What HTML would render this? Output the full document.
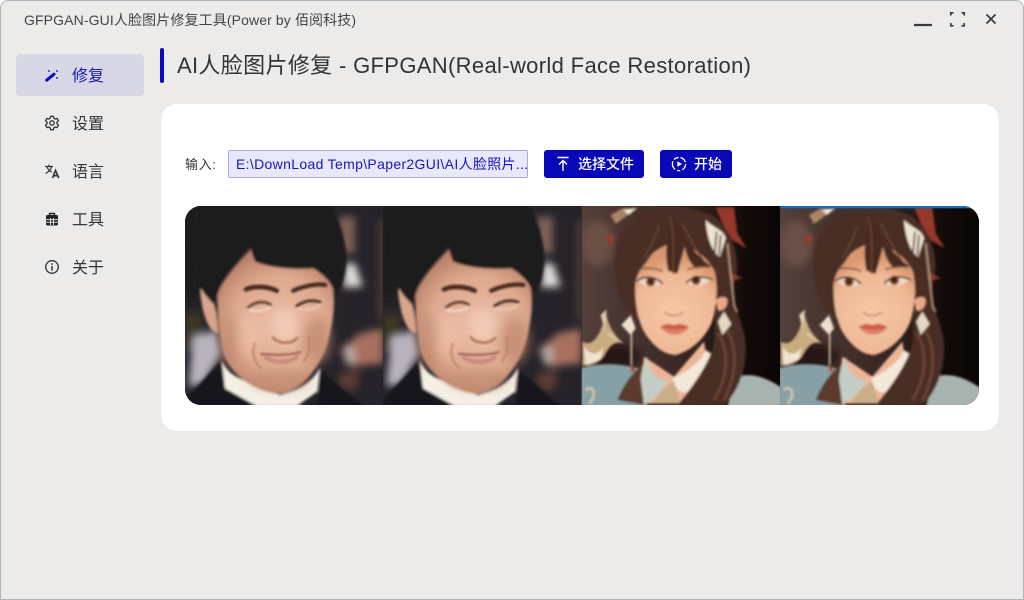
<!DOCTYPE html>
<html lang="zh">
<head>
<meta charset="utf-8">
<title>GFPGAN-GUI</title>
<style>
html,body{margin:0;padding:0;width:1024px;height:600px;overflow:hidden;background:#fff}
body{font-family:"Liberation Sans","Noto Sans CJK SC",sans-serif;position:relative}
#win{position:absolute;left:0;top:0;width:1024px;height:600px;box-sizing:border-box;background:#ecebea;border:1px solid #b4b4b4;border-radius:8px 8px 0 0;overflow:hidden}
.a{position:absolute;white-space:nowrap}
.nav{position:absolute;left:72px;font-size:16px;line-height:20px;color:#333}
.ic{position:absolute;left:44px;width:16px;height:16px}
</style>
</head>
<body>
<div id="win"></div>
<div class="a" style="left:24px;top:11px;font-size:14px;line-height:19px;color:#444;letter-spacing:.12px">GFPGAN-GUI人脸图片修复工具(Power by 佰阅科技)</div>

<svg class="a" style="left:905px;top:5px" width="110" height="30" viewBox="0 0 110 30" fill="none" stroke="#3a3a3a">
  <path d="M9 20H27" stroke-width="2.2"/>
  <path d="M45.8 10.5V7.8H48.5M56.5 7.8H59.2V10.5M59.2 18V20.8H56.5M48.5 20.8H45.8V18" stroke-width="1.7"/>
  <path d="M81.5 9.5L90.5 18.5M90.5 9.5L81.5 18.5" stroke-width="1.7"/>
</svg>

<div class="a" style="left:16px;top:54px;width:128px;height:42px;background:#d7d7e5;border-radius:4px"></div>

<svg class="ic" style="top:67px" viewBox="0 0 16 16">
  <path d="M2.7 13.2L10 7.2" stroke="#0a0ac0" stroke-width="3" stroke-linecap="round"/>
  <path d="M4 3h2v2H4zM12 3h2v2h-2zM12 10h2v2h-2z" fill="#5a5ad6"/>
</svg>
<div class="nav" style="top:67px;color:#1818b8">修复</div>

<svg class="ic" style="top:115px" viewBox="0 0 16 16" fill="none" stroke="#333" stroke-width="1.3">
  <path d="M6.6 1.3h2.8l.4 1.9 1.4.8 1.9-.6 1.4 2.4-1.5 1.3v1.8l1.5 1.3-1.4 2.4-1.9-.6-1.4.8-.4 1.9H6.6l-.4-1.9-1.4-.8-1.9.6-1.4-2.4 1.5-1.3V7.1L1.5 5.8l1.4-2.4 1.9.6 1.4-.8z" stroke-linejoin="round"/>
  <circle cx="8" cy="8" r="2.2"/>
</svg>
<div class="nav" style="top:115px">设置</div>

<svg class="ic" style="top:163px" viewBox="0 0 16 16" fill="none" stroke="#333" stroke-width="1.2">
  <path d="M1 3.5H9M5 1.5V3.5M7.5 3.5C6.8 6.5 4.5 9 1.5 10.5M2.8 3.5C3.6 6 5.5 8 8 9.2"/>
  <path d="M8.5 15L11.5 7.5L14.8 15M9.7 12.7H13.6" stroke-width="1.6"/>
</svg>
<div class="nav" style="top:163px">语言</div>

<svg class="ic" style="top:211px" viewBox="0 0 16 16">
  <path d="M5.5 4V2.5h5V4" fill="none" stroke="#222" stroke-width="1.4"/>
  <rect x="2" y="4" width="12" height="10.5" rx="1.6" fill="#222"/>
  <path d="M2 8.7H14M2 11.2H14M6.6 7V14M9.4 7V14" stroke="#ecebea" stroke-width=".9"/>
</svg>
<div class="nav" style="top:211px">工具</div>

<svg class="ic" style="top:259px" viewBox="0 0 16 16" fill="none" stroke="#333" stroke-width="1.3">
  <circle cx="8" cy="8" r="6.3"/>
  <path d="M8 7V11.5" stroke-width="1.5"/>
  <path d="M8 4.3V5.8" stroke-width="1.6"/>
</svg>
<div class="nav" style="top:259px">关于</div>

<div class="a" style="left:160px;top:48px;width:4px;height:35px;background:#0a0abd;border-radius:2px"></div>
<div class="a" style="left:177px;top:51px;font-size:22px;line-height:30px;color:#333;letter-spacing:.34px">AI人脸图片修复 - GFPGAN(Real-world Face Restoration)</div>

<div class="a" style="left:161px;top:104px;width:838px;height:327px;background:#fff;border-radius:16px"></div>

<div class="a" style="left:185px;top:156px;font-size:13px;line-height:18px;color:#333;letter-spacing:.7px">输入:</div>
<div class="a" style="left:228px;top:150px;width:300px;height:28px;box-sizing:border-box;background:#e8e8fa;border:1px solid #a8a8ee;border-radius:2px;padding-left:7px;font-size:14px;line-height:26px;color:#1616c4;overflow:hidden;letter-spacing:.33px">E:\DownLoad Temp\Paper2GUI\AI人脸照片...</div>

<div class="a" style="left:544px;top:150px;width:100px;height:28px;background:#0808b8;border-radius:3px"></div>
<svg class="a" style="left:555px;top:156px" width="16" height="16" viewBox="0 0 16 16" fill="none" stroke="#fff" stroke-width="1.4">
  <path d="M2.5 1.5H13.5M8 15V4.5M4 8.5L8 4.5L12 8.5"/>
</svg>
<div class="a" style="left:578px;top:155px;font-size:14px;line-height:18px;color:#fff;font-weight:500">选择文件</div>

<div class="a" style="left:660px;top:150px;width:72px;height:28px;background:#0808b8;border-radius:3px"></div>
<svg class="a" style="left:671px;top:156px" width="16" height="16" viewBox="0 0 16 16" fill="none" stroke="#fff" stroke-width="1.3">
  <circle cx="8" cy="8" r="6.6" stroke-dasharray="7 2.2 3 2.2 9 2 5 2"/>
  <path d="M6.3 5.2L11 8L6.3 10.8z" fill="#fff" stroke="none"/>
</svg>
<div class="a" style="left:694px;top:155px;font-size:14px;line-height:18px;color:#fff;font-weight:500">开始</div>

<svg class="a" style="left:185px;top:206px" width="794" height="199" viewBox="0 0 2382 597">
<defs>
  <clipPath id="cr"><rect width="2382" height="597" rx="48"/></clipPath>
  <clipPath id="c1"><rect x="15" y="18" width="595" height="597"/></clipPath>
  <clipPath id="c3"><rect x="3" y="18" width="597" height="597"/></clipPath>
  <filter id="b1" x="-10%" y="-10%" width="120%" height="120%"><feGaussianBlur stdDeviation="4"/></filter>
  <filter id="b2" x="-20%" y="-20%" width="140%" height="140%"><feGaussianBlur stdDeviation="12"/></filter>
  <filter id="b4" x="-40%" y="-40%" width="180%" height="180%"><feGaussianBlur stdDeviation="18"/></filter>
  <filter id="b3" x="-10%" y="-10%" width="120%" height="120%"><feGaussianBlur stdDeviation="3"/></filter>
  <filter id="b5" x="-20%" y="-40%" width="140%" height="180%"><feGaussianBlur stdDeviation="3.5"/></filter>
  <radialGradient id="sk" gradientUnits="userSpaceOnUse" cx="300" cy="370" r="220">
    <stop offset="0" stop-color="#eabda6"/><stop offset=".65" stop-color="#dda88e"/><stop offset="1" stop-color="#b98068"/>
  </radialGradient>
  <radialGradient id="sw" gradientUnits="userSpaceOnUse" cx="280" cy="340" r="170">
    <stop offset="0" stop-color="#f6c7a6"/><stop offset=".7" stop-color="#efb895"/><stop offset="1" stop-color="#d9966f"/>
  </radialGradient>
  <linearGradient id="bw" x1="0" x2="1" y1="0" y2="0">
    <stop offset="0" stop-color="#55403a"/><stop offset=".5" stop-color="#382622"/><stop offset=".78" stop-color="#120a09"/><stop offset="1" stop-color="#060303"/>
  </linearGradient>

  <g id="man">
    <rect x="0" y="0" width="640" height="640" fill="#26232a"/>
    <g filter="url(#b2)">
      <rect x="0" y="0" width="60" height="300" fill="#1d1b1c"/>
      <rect x="15" y="340" width="50" height="110" fill="#3d3724"/>
      <path d="M40 410L110 390L125 460L70 550L25 560z" fill="#b9b3bd"/>
      <rect x="475" y="50" width="50" height="110" fill="#7d6057"/>
      <path d="M495 190L525 190L548 260L490 262z" fill="#e2dedc"/>
      <rect x="595" y="60" width="20" height="300" fill="#4f3a35"/>
      <path d="M480 450L540 400L610 385V490L510 500z" fill="#a86f5e"/>
      <rect x="495" y="440" width="30" height="50" fill="#b0a8a2"/>
      <path d="M475 520L540 510L530 570L480 570z" fill="#5c3a32"/>
    </g>
    <g filter="url(#b1)">
      <path d="M60 268C85 262 112 300 115 400C90 400 66 350 60 268z" fill="#d8a58c"/>
      <path d="M15 600L125 480L220 615L415 615L420 510L545 615L545 640H15z" fill="#14161a"/>
      <path d="M125 480C140 530 200 545 300 585C360 570 405 540 420 500L412 575L350 618H230L135 565z" fill="#f4f0e6"/>
      <path d="M112 290C115 250 190 170 230 130L440 215C470 270 465 330 450 400C430 500 360 575 300 582C220 575 140 520 125 440C118 400 112 340 112 290z" fill="url(#sk)"/>
      <path d="M50 0H445C480 60 505 140 498 190C495 240 480 270 468 285C450 240 430 225 400 205C350 210 270 205 225 185C215 160 212 145 210 130C190 180 130 220 120 265C110 290 105 305 100 312C80 290 60 270 52 240C35 190 35 90 50 0z" fill="#1e1a1b"/>
    </g>
    <g filter="url(#b4)">
      <ellipse cx="315" cy="380" rx="38" ry="55" fill="#f4d0bd" opacity=".8"/>
      <ellipse cx="205" cy="400" rx="50" ry="55" fill="#efc2aa" opacity=".7"/>
      <ellipse cx="410" cy="420" rx="40" ry="70" fill="#c08a70" opacity=".8"/>
      <ellipse cx="150" cy="420" rx="28" ry="80" fill="#bd846c" opacity=".7"/>
      <ellipse cx="300" cy="540" rx="90" ry="25" fill="#c08b72" opacity=".7"/>
    </g>
    <g filter="url(#b5)" fill="none" stroke-linecap="round">
      <path d="M198 268C225 256 265 260 290 272" stroke="#46291e" stroke-width="14"/>
      <path d="M340 272C370 258 410 250 436 255" stroke="#46291e" stroke-width="13"/>
      <path d="M205 322C225 304 255 302 272 314" stroke="#63402f" stroke-width="8"/>
      <path d="M207 330C230 336 255 332 270 322" stroke="#f6dccd" stroke-width="6"/>
      <path d="M350 318C375 300 400 300 420 306" stroke="#412b22" stroke-width="8"/>
      <path d="M352 326C380 332 405 326 420 316" stroke="#f0d0bd" stroke-width="5"/>
      <path d="M278 412C295 432 335 434 352 414" stroke="#a96d56" stroke-width="7"/>
      <path d="M243 462C280 466 330 466 362 456" stroke="#8c4c42" stroke-width="5"/>
      <path d="M258 474C285 490 335 488 350 470" stroke="#c9897f" stroke-width="12"/>
      <path d="M225 430C212 460 225 490 245 505M385 410C395 440 385 465 372 485" stroke="#b87f66" stroke-width="5"/>
    </g>
  </g>

  <g id="woman">
    <rect x="0" y="0" width="640" height="640" fill="url(#bw)"/>
    <g filter="url(#b2)">
      <ellipse cx="50" cy="130" rx="50" ry="70" fill="#6b5047"/>
      <ellipse cx="90" cy="470" rx="90" ry="40" fill="#261917"/>
    </g>
    <g filter="url(#b3)">
      <path d="M0 505C60 485 130 490 185 510L200 620H0z" fill="#86a0a6"/>
      <path d="M470 530C520 515 570 540 605 565V620H440z" fill="#a7b3ae"/>
      <path d="M15 570C40 550 50 590 25 610" fill="none" stroke="#d6c8a8" stroke-width="7"/>
      <path d="M5 425C30 440 60 420 75 335C85 385 100 405 130 430C100 420 85 440 70 470C50 495 20 500 5 495z" fill="#c9ab80"/>
      <path d="M10 440C30 470 55 465 68 440L60 478L15 495z" fill="#efe4d0"/>
      <path d="M110 600C130 550 160 510 195 490L190 615z" fill="#5b3a2e"/>
      <path d="M190 470L280 530L370 425L385 520L340 610H190L180 540z" fill="#edb596"/>
      <path d="M200 470C205 530 250 550 270 535L225 590L190 615L180 530z" fill="#c2cec6"/>
      <path d="M375 450C360 490 310 520 275 535C285 565 300 590 330 570C365 520 385 490 390 460z" fill="#f2e8d8"/>
      <path d="M245 570L280 545L300 610H215z" fill="#c9ae88"/>
      <path d="M270 22C190 25 125 70 108 140C95 200 105 270 130 320L172 358L170 225L200 170L280 130L385 195L410 290L400 400C410 440 370 520 290 615H430C480 570 505 480 492 410C480 350 452 310 462 250C485 170 450 90 400 50C360 30 310 20 270 22z" fill="#4a2e25"/>
      <path d="M412 400C440 440 450 520 400 600M440 390C470 450 470 520 430 600" fill="none" stroke="#6c4434" stroke-width="8"/>
      <path d="M165 230C160 300 170 370 200 410C225 445 255 465 285 465C325 455 370 420 392 370C410 320 412 260 402 215C380 170 330 130 270 130C220 150 180 180 165 230z" fill="url(#sw)"/>
      <path d="M405 300C425 285 442 290 440 305C438 325 425 335 412 330z" fill="#e9a987"/>
      <path d="M150 240C165 160 220 90 270 28L264 118C245 130 220 150 195 190C180 205 168 222 162 262z" fill="#4a2e25"/>
      <path d="M270 28C300 100 340 165 392 198L345 205C335 195 320 180 312 140L290 222L262 212C255 170 255 140 262 118z" fill="#472b22"/>
      <path d="M268 50C285 110 275 180 278 222M235 80C220 120 205 150 190 175M305 70C325 110 345 150 375 190" fill="none" stroke="#6e4736" stroke-width="4"/>
      <path d="M178 206C200 203 225 205 246 213M320 208C340 202 365 198 388 202" fill="none" stroke="#7c4c3a" stroke-width="5"/>
      <path d="M172 244C190 228 225 230 244 252C225 262 195 262 172 244z" fill="#f2d6c6"/>
      <path d="M318 250C335 230 370 228 392 240C370 258 340 262 318 250z" fill="#f2d6c6"/>
      <circle cx="210" cy="245" r="14" fill="#6d3c22"/><circle cx="346" cy="241" r="14" fill="#6d3c22"/>
      <circle cx="210" cy="245" r="5" fill="#1f0f0a"/><circle cx="346" cy="241" r="5" fill="#1f0f0a"/>
      <path d="M168 244C190 226 225 228 246 252M316 250C335 228 370 226 396 240" fill="none" stroke="#2a1610" stroke-width="5"/>
      <path d="M252 336C265 350 295 350 308 336" fill="none" stroke="#d09275" stroke-width="6"/>
      <path d="M237 383C255 368 270 372 280 376C292 370 310 370 327 383C300 392 265 392 237 383z" fill="#cc5c44"/>
      <path d="M243 386C265 392 300 392 322 384C310 408 262 412 243 386z" fill="#dd7f66"/>
      <path d="M90 45L125 25L170 25L135 50L105 72z" fill="#a98468"/>
      <path d="M128 30L168 24L145 45z" fill="#efe5d3"/>
      <path d="M72 112L100 105L95 135z" fill="#9c3a2c"/>
      <path d="M375 60C400 85 430 90 435 115L418 170C395 160 378 110 375 60z" fill="#ece3d2"/>
      <path d="M408 95L402 160M420 105L415 165" fill="none" stroke="#4a2a20" stroke-width="5"/>
      <path d="M405 22L460 22L470 100L498 145L455 120L425 70z" fill="#96382a"/>
      <path d="M445 215L485 235L450 242z" fill="#8e3a2c"/>
      <path d="M440 130L450 220L462 320L470 335" fill="none" stroke="#b89a82" stroke-width="5"/>
      <path d="M412 365L430 335L452 372L425 405z" fill="#e4d8c2"/>
      <path d="M122 375L150 345L165 385L150 405z" fill="#ece0cc"/>
      <path d="M152 400V500" stroke="#dcc6ac" stroke-width="5"/>
      <path d="M150 490L165 515L150 515z" fill="#a8402f"/>
      <path d="M60 345L78 328L70 395L120 430L90 400L75 400z" fill="#e0cfac"/>
    </g>
  </g>
</defs>

<g clip-path="url(#cr)">
  <rect width="2382" height="597" fill="#222"/>
  <g clip-path="url(#c1)" transform="translate(-15,-18)"><use href="#man"/></g>
  <g transform="translate(594,0)"><g clip-path="url(#c1)" transform="translate(-15,-18)"><use href="#man"/></g></g>
  <g transform="translate(1190,0)"><g clip-path="url(#c3)" transform="translate(-3,-18)"><use href="#woman"/></g></g>
  <g transform="translate(1785,0)"><g clip-path="url(#c3)" transform="translate(-3,-18)"><use href="#woman"/></g></g>
  <rect x="1785" y="0" width="597" height="7" fill="#1a6cb2"/>
</g>
</svg>
</body>
</html>
